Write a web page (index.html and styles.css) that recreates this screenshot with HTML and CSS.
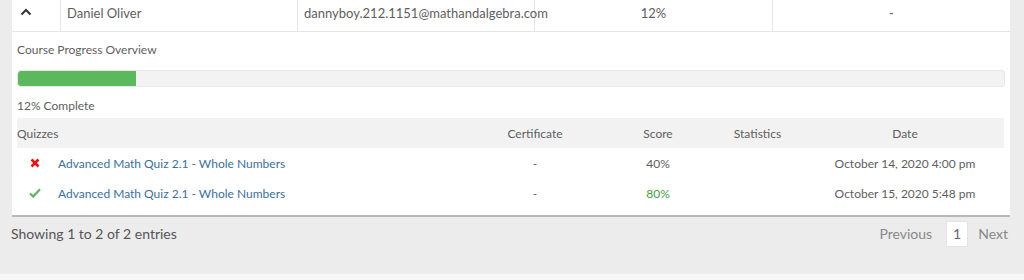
FILE: index.html
```html
<!DOCTYPE html>
<html>
<head>
<meta charset="utf-8">
<link rel="stylesheet" href="styles.css">
</head>
<body>
<div class="page">
  <div class="panel">
    <div class="user-row">
      <div class="cell caret-cell">
        <svg class="caret" width="12" height="8" viewBox="0 0 12 8"><path d="M1.5 6.5 L6 2 L10.5 6.5" fill="none" stroke="#333" stroke-width="2"/></svg>
      </div>
      <div class="cell name-cell">Daniel Oliver</div>
      <div class="cell email-cell">dannyboy.212.1151@mathandalgebra.com</div>
      <div class="cell center prog-cell">12%</div>
      <div class="cell center last-cell">-</div>
    </div>
    <div class="details">
      <div class="overview-title">Course Progress Overview</div>
      <div class="bar"><div class="bar-fill" style="width:12%"></div></div>
      <div class="complete">12% Complete</div>
      <div class="quiz-table">
        <div class="qrow qhead">
          <div class="qc qname">Quizzes</div>
          <div class="qc center">Certificate</div>
          <div class="qc center">Score</div>
          <div class="qc center">Statistics</div>
          <div class="qc center">Date</div>
        </div>
        <div class="qrow">
          <div class="qc qname">
            <svg class="status" width="10" height="10" viewBox="0 0 10 10"><path d="M1.5 1.5 L8.5 8.5 M8.5 1.5 L1.5 8.5" stroke="#ee1111" stroke-width="2.6" stroke-linecap="butt"/></svg>
            <a class="qlink">Advanced Math Quiz 2.1 - Whole Numbers</a>
          </div>
          <div class="qc center">-</div>
          <div class="qc center">40%</div>
          <div class="qc center"></div>
          <div class="qc center">October 14, 2020 4:00 pm</div>
        </div>
        <div class="qrow">
          <div class="qc qname">
            <svg class="status" width="12" height="10" viewBox="0 0 12 10"><path d="M1 5.5 L4.2 8.6 L11 1.2" fill="none" stroke="#5cb85c" stroke-width="2.2"/></svg>
            <a class="qlink">Advanced Math Quiz 2.1 - Whole Numbers</a>
          </div>
          <div class="qc center">-</div>
          <div class="qc center pass">80%</div>
          <div class="qc center"></div>
          <div class="qc center">October 15, 2020 5:48 pm</div>
        </div>
      </div>
    </div>
  </div>
  <div class="footer">
    <div class="info">Showing 1 to 2 of 2 entries</div>
    <div class="pager">
      <span class="pg">Previous</span>
      <span class="pg current">1</span>
      <span class="pg">Next</span>
    </div>
  </div>
</div>
<div class="bottom-strip"></div>
</body>
</html>
```

FILE: styles.css
```css
html, body {
  margin: 0;
  padding: 0;
}
body {
  background: #ececec;
  font-family: Lato, "Open Sans", sans-serif;
  color: #5e5e5e;
  width: 1024px;
  height: 280px;
  overflow: hidden;
}
.page {
  height: 274px;
}
.panel {
  margin: 0 14px 0 12px;
  background: #fff;
  border-bottom: 2px solid #b8b8b8;
  height: 215px;
}
.user-row {
  display: grid;
  grid-template-columns: 49px 237px 237px 238px 237px;
  height: 31px;
  border-bottom: 1px solid #e6e6e6;
  font-size: 13px;
  color: #5e5e5e;
}
.cell {
  border-right: 1px solid #e6e6e6;
  padding: 4px 6px 0 6px;
  line-height: 18px;
  white-space: nowrap;
}
.cell.last-cell {
  border-right: none;
}
.center {
  text-align: center;
}
.caret-cell {
  padding-left: 8px;
}
.caret {
  display: block;
  margin-top: 4px;
}
.details {
  padding: 9px 5px 0 5px;
}
.overview-title {
  font-size: 12px;
  line-height: 18px;
}
.bar {
  margin-top: 11px;
  height: 15px;
  background: #f3f3f3;
  border: 1px solid #e8e8e8;
  border-radius: 3px;
  overflow: hidden;
}
.bar-fill {
  height: 100%;
  background: #5cb85c;
  border-radius: 3px 0 0 3px;
}
.complete {
  margin-top: 10px;
  font-size: 12px;
  line-height: 18px;
}
.quiz-table {
  margin-top: 3px;
  margin-right: 1px;
  font-size: 12px;
}
.qrow {
  display: grid;
  grid-template-columns: 446px 144px 102px 97px 198px;
  height: 30px;
  align-items: center;
}
.qhead {
  background: #f2f2f2;
}
.qc {
  white-space: nowrap;
}
.qname {
  display: flex;
  align-items: center;
}
.qrow:not(.qhead) .qname {
  padding-left: 12px;
}
.status {
  display: block;
  width: 12px;
  margin-right: 17px;
}
.qlink {
  color: #3b6f9f;
  text-decoration: none;
}
.pass {
  color: #3f9b3f;
}
.footer {
  display: flex;
  justify-content: space-between;
  align-items: flex-start;
  padding: 4px 10px 0 11px;
}
.info {
  font-size: 14px;
  color: #555;
  line-height: 18px;
  margin-top: 4px;
}
.pager {
  display: flex;
  align-items: center;
  font-size: 14px;
  color: #888;
}
.pg {
  line-height: 24px;
  padding: 0 6px;
}
.pg.current {
  background: #fff;
  border: 1px solid #e4e4e4;
  color: #666;
  margin: 0 4px 0 8px;
}
.bottom-strip {
  height: 6px;
  background: #f7f7f7;
}
```
